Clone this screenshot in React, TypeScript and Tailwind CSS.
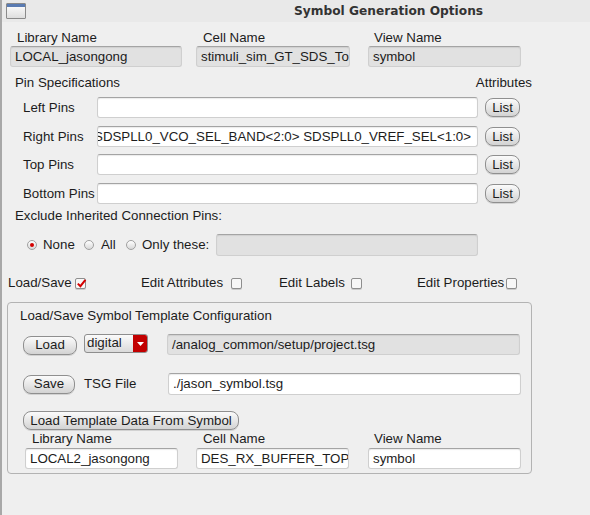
import React from "react";

function Field({
  cls,
  gray,
  children,
  right,
}: {
  cls: string;
  gray?: boolean;
  children?: React.ReactNode;
  right?: boolean;
}) {
  return (
    <div
      dir={right ? "rtl" : undefined}
      className={`${cls} shrink-0 flex items-center overflow-hidden whitespace-nowrap rounded-[3px] border border-[#cfcfcf] border-t-[#a4a4a4] shadow-[inset_0_1px_1px_rgba(0,0,0,0.08)] ${
        gray ? "bg-[#e1e1e1]" : "bg-white"
      } ${right ? "pr-[6px]" : "pl-[4px]"}`}
    >
      <span dir="ltr" className="shrink-0">
        {children}
      </span>
    </div>
  );
}

function Btn({ cls, children }: { cls: string; children: React.ReactNode }) {
  return (
    <div
      className={`${cls} shrink-0 h-[19px] flex items-center justify-center rounded-[8px] border border-[#8f8f8f] bg-[linear-gradient(to_bottom,#fbfbfb,#d3d3d3)] shadow-[0_1px_0_rgba(0,0,0,0.12)] text-[13.3px] leading-none text-[#1c1c1c] whitespace-nowrap`}
    >
      {children}
    </div>
  );
}

function Radio({ on }: { on?: boolean }) {
  return (
    <div className="shrink-0 w-[10px] h-[10px] rounded-full border border-[#a0a0a0] bg-[linear-gradient(to_bottom,#ffffff,#d8d8d8)] flex items-center justify-center">
      {on && <div className="w-[4px] h-[4px] rounded-full bg-[#d40000]" />}
    </div>
  );
}

function Check({ on }: { on?: boolean }) {
  return (
    <div className="relative shrink-0 w-[11px] h-[11px] rounded-[2px] border border-[#8e8e8e] bg-[#f7f7f7] shadow-[0_1px_0_rgba(0,0,0,0.15)]">
      {on && (
        <svg
          className="absolute left-[0px] top-[-1px]"
          width="11"
          height="11"
          viewBox="0 0 11 11"
        >
          <path
            d="M1.8 5.6 L4.4 8.2 L9.4 1.8"
            fill="none"
            stroke="#d40000"
            strokeWidth="2"
          />
        </svg>
      )}
    </div>
  );
}

function PinRow({
  label,
  mt,
  children,
  right,
}: {
  label: string;
  mt: string;
  children?: React.ReactNode;
  right?: boolean;
}) {
  return (
    <div className={`${mt} flex items-center h-[21px]`}>
      <div className="w-[95px] pl-[21px] shrink-0 whitespace-nowrap">{label}</div>
      <Field cls="w-[381px] h-[21px]" right={right}>
        {children}
      </Field>
      <Btn cls="ml-[7px] w-[35px]">List</Btn>
    </div>
  );
}

export default function App() {
  return (
    <div className="w-[590px] h-[515px] overflow-hidden bg-[#efefef] border-l-2 border-[#a8a8a8] font-['Liberation_Sans',Arial,sans-serif] text-[13.3px] leading-[16px] text-[#1c1c1c]">
      {/* Title bar */}
      <div className="h-[22px] flex items-center bg-[#e9e9e9]">
        <div className="ml-[4px] w-[20px] h-[16px] border border-[#8a8a8a] rounded-[1px] bg-[linear-gradient(to_bottom,#ffffff,#dedede)] overflow-hidden">
          <div className="h-[3px] bg-[#5a7bb2]" />
        </div>
        <div className="ml-[268px] font-['DejaVu_Sans',sans-serif] font-bold text-[12.2px] text-[#333] whitespace-nowrap">
          Symbol Generation Options
        </div>
      </div>

      {/* Top names */}
      <div className="mt-[8px] flex pl-[8px]">
        <div className="flex flex-col w-[172px]">
          <div className="pl-[7px] h-[16px]">Library Name</div>
          <Field cls="w-[172px] h-[21px]" gray>
            LOCAL_jasongong
          </Field>
        </div>
        <div className="ml-[14px] flex flex-col w-[154px]">
          <div className="pl-[7px] h-[16px]">Cell Name</div>
          <Field cls="w-[154px] h-[21px]" gray>
            stimuli_sim_GT_SDS_To
          </Field>
        </div>
        <div className="ml-[18px] flex flex-col w-[153px]">
          <div className="pl-[6px] h-[16px]">View Name</div>
          <Field cls="w-[153px] h-[21px]" gray>
            symbol
          </Field>
        </div>
      </div>

      {/* Pin specs header */}
      <div className="mt-[8px] h-[16px] flex pl-[13px] w-[532px] justify-between">
        <div>Pin Specifications</div>
        <div className="mr-[2px]">Attributes</div>
      </div>

      <div>
        <PinRow label="Left Pins" mt="mt-[6px]" />
        <PinRow label="Right Pins" mt="mt-[8px]" right>
          SDSPLL0_VCO_SEL_BAND&lt;2:0&gt; SDSPLL0_VREF_SEL&lt;1:0&gt;
        </PinRow>
        <PinRow label="Top Pins" mt="mt-[7px]" />
        <PinRow label="Bottom Pins" mt="mt-[8px]" />
      </div>

      {/* Exclude */}
      <div className="mt-[4px] h-[16px] pl-[13px]">Exclude Inherited Connection Pins:</div>
      <div className="mt-[10px] h-[22px] flex items-center pl-[25px]">
        <Radio on />
        <span className="ml-[6px] w-[41px]">None</span>
        <Radio />
        <span className="ml-[7px] w-[25px]">All</span>
        <Radio />
        <span className="ml-[6px] w-[74px] whitespace-nowrap">Only these:</span>
        <Field cls="w-[262px] h-[22px]" gray />
      </div>

      {/* Checkbox row */}
      <div className="mt-[19px] h-[16px] flex items-center pl-[6px]">
        <div className="w-[133px] flex items-center">
          <span>Load/Save</span>
          <span className="ml-[3px]">
            <Check on />
          </span>
        </div>
        <div className="w-[138px] flex items-center">
          <span>Edit Attributes</span>
          <span className="ml-[8px]">
            <Check />
          </span>
        </div>
        <div className="w-[138px] flex items-center">
          <span>Edit Labels</span>
          <span className="ml-[6px]">
            <Check />
          </span>
        </div>
        <div className="flex items-center">
          <span>Edit Properties</span>
          <span className="ml-[2px]">
            <Check />
          </span>
        </div>
      </div>

      {/* Group box */}
      <div className="mt-[11px] ml-[5px] w-[525px] h-[172px] border border-[#b3b3b3] rounded-[4px]">
        <div className="mt-[5px] h-[16px] pl-[12px]">Load/Save Symbol Template Configuration</div>

        <div className="mt-[10px] flex items-center h-[21px] pl-[15px]">
          <Btn cls="w-[54px] mt-[1px]">Load</Btn>
          <div className="ml-[7px] w-[64px] h-[19px] mt-[-2px] flex rounded-[3px] border border-[#8e8e8e] bg-[linear-gradient(to_bottom,#fbfbfb,#dadada)] overflow-hidden">
            <div className="flex-1 pl-[2px] leading-[15px]">digital</div>
            <div className="w-[14px] h-full bg-[#c20000] flex items-center justify-center">
              <svg width="7" height="4" viewBox="0 0 7 4">
                <path d="M0 0 L7 0 L3.5 4 Z" fill="#ffffff" />
              </svg>
            </div>
          </div>
          <Field cls="ml-[19px] w-[353px] h-[21px]" gray>
            /analog_common/setup/project.tsg
          </Field>
        </div>

        <div className="mt-[18px] flex items-center h-[22px] pl-[15px]">
          <Btn cls="w-[52px]">Save</Btn>
          <span className="ml-[9px] w-[84px] whitespace-nowrap">TSG File</span>
          <Field cls="w-[353px] h-[22px]">./jason_symbol.tsg</Field>
        </div>

        <div className="mt-[16px] pl-[15px] flex">
          <Btn cls="w-[216px]">Load Template Data From Symbol</Btn>
        </div>

        <div className="mt-[1px] flex pl-[17px]">
          <div className="flex flex-col w-[153px]">
            <div className="pl-[7px] h-[16px]">Library Name</div>
            <Field cls="mt-[1px] w-[153px] h-[21px]">LOCAL2_jasongong</Field>
          </div>
          <div className="ml-[18px] flex flex-col w-[153px]">
            <div className="pl-[7px] h-[16px]">Cell Name</div>
            <Field cls="mt-[1px] w-[153px] h-[21px]">DES_RX_BUFFER_TOP</Field>
          </div>
          <div className="ml-[19px] flex flex-col w-[153px]">
            <div className="pl-[6px] h-[16px]">View Name</div>
            <Field cls="mt-[1px] w-[153px] h-[21px]">symbol</Field>
          </div>
        </div>
      </div>
    </div>
  );
}
